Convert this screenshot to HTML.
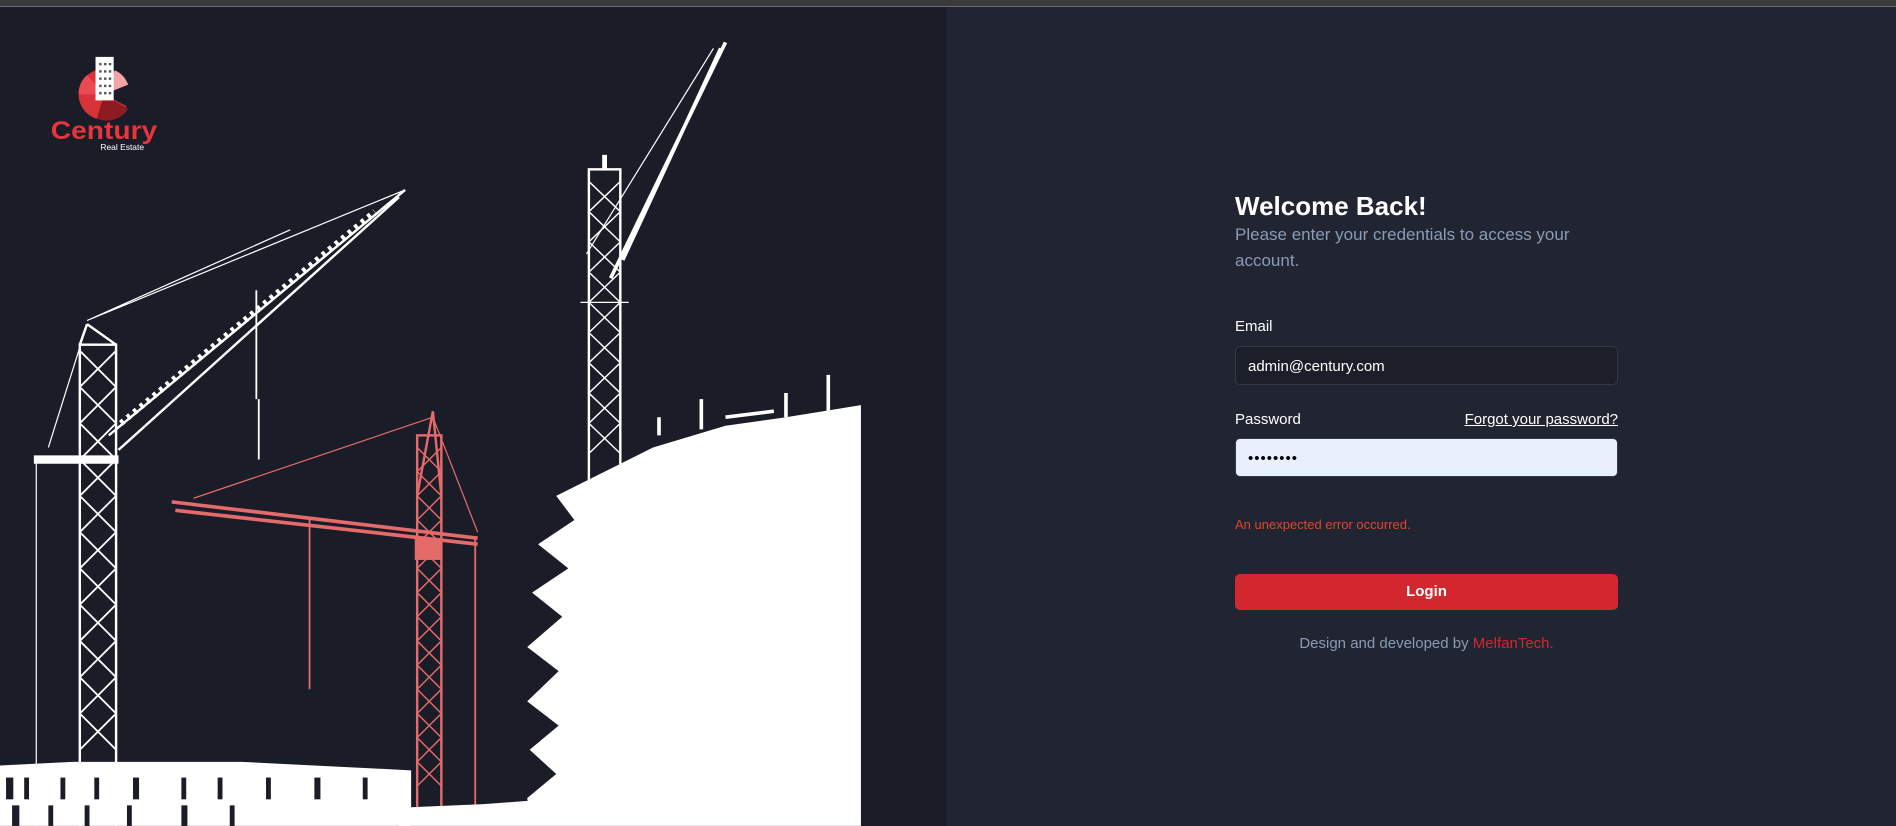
<!DOCTYPE html>
<html><head><meta charset="utf-8"><style>
*{margin:0;padding:0;box-sizing:border-box}
html,body{width:1896px;height:826px;overflow:hidden;background:#212532;font-family:"Liberation Sans",sans-serif}
.top{position:absolute;left:0;top:0;width:1896px;height:7px;background:#3a3a3a;border-bottom:1px solid #6a6a6a}
.left{position:absolute;left:0;top:7px;width:947px;height:819px;background:#1a1c27}
svg.art{position:absolute;left:0;top:0}
.form{position:absolute;left:1235px;top:0;width:383px;color:#fff}
h1{position:absolute;top:191px;font-size:26px;font-weight:bold;white-space:nowrap}
.sub{position:absolute;top:222px;width:383px;font-size:17px;line-height:26px;color:#8a9bb3}
.lbl{position:absolute;font-size:15px;color:#fff}
.inp{position:absolute;left:0;width:383px;height:39px;border:1px solid #343948;border-radius:5px;font-size:15px;padding:11px 12px}
.err{position:absolute;top:517px;font-size:13px;color:#e0442f}
.btn{position:absolute;top:574px;left:0;width:383px;height:36px;background:#d32730;border-radius:5px;text-align:center;line-height:36px;font-weight:bold;font-size:15px}
.foot{position:absolute;top:635px;width:383px;text-align:center;font-size:15px;color:#8a9bb3}
</style></head><body>
<div class="top"></div>
<div class="left"></div>
<svg class="art" width="1896" height="826" viewBox="0 0 1568 683">
<!-- logo -->
<g>
<circle cx="86" cy="78" r="21" fill="#d8323a"/>
<path d="M86 78 L107 67 A21 21 0 0 1 107 89 Z" fill="#1a1c27"/>
<path d="M86 78 L95 58 A21 21 0 0 1 106 70 Z" fill="#f4a3a6"/>
<path d="M86 78 L65 78 A21 21 0 0 1 72 62 Z" fill="#ea4a51"/>
<path d="M86 78 L106 90 A21 21 0 0 1 80 98 Z" fill="#8f1b22"/>
<rect x="79" y="47" width="15" height="36" fill="#fff"/>
<g fill="#555"><rect x="82" y="52" width="2" height="2"/><rect x="86" y="52" width="2" height="2"/><rect x="90" y="52" width="2" height="2"/><rect x="82" y="58" width="2" height="2"/><rect x="86" y="58" width="2" height="2"/><rect x="90" y="58" width="2" height="2"/><rect x="82" y="64" width="2" height="2"/><rect x="86" y="64" width="2" height="2"/><rect x="90" y="64" width="2" height="2"/><rect x="82" y="70" width="2" height="2"/><rect x="86" y="70" width="2" height="2"/><rect x="90" y="70" width="2" height="2"/><rect x="82" y="76" width="2" height="2"/><rect x="86" y="76" width="2" height="2"/><rect x="90" y="76" width="2" height="2"/></g>
<text x="42" y="115" font-family="Liberation Sans" font-weight="bold" font-size="21" fill="#e8343d" textLength="88" lengthAdjust="spacingAndGlyphs">Century</text>
<text x="83" y="124" font-family="Liberation Sans" font-size="7" fill="#fff">Real Estate</text>
</g>
<!-- left white crane -->
<g stroke="#fff" fill="none">
<rect x="66" y="285" width="30" height="400" stroke-width="2"/>
<path d="M66 290 L96 320 M96 290 L66 320 M66 320 L96 350 M96 320 L66 350 M66 350 L96 380 M96 350 L66 380 M66 380 L96 410 M96 380 L66 410 M66 410 L96 440 M96 410 L66 440 M66 440 L96 470 M96 440 L66 470 M66 470 L96 500 M96 470 L66 500 M66 500 L96 530 M96 500 L66 530 M66 530 L96 560 M96 530 L66 560 M66 560 L96 590 M96 560 L66 590 M66 590 L96 620 M96 590 L66 620" stroke-width="1.5"/>
<path d="M72 268 L66 285 M72 268 L96 285" stroke-width="2"/>
<path d="M90 360 L335 157 M98 372 L330 163" stroke-width="2"/>
<path d="M72 265 L335 157 M72 265 L240 190 M40 370 L72 268 M30 380 L30 683" stroke-width="1"/>
<path d="M28 380 L98 380" stroke-width="7"/>
<path d="M212 240 L212 330 M214 330 L214 380" stroke-width="1.5"/>
<path d="M100 350 L310 175" stroke-width="5" stroke-dasharray="3 4"/>
</g>
<!-- red crane -->
<g stroke="#e56b6b" fill="none">
<rect x="345" y="360" width="20" height="310" stroke-width="2"/>
<path d="M345 370 L365 390 M365 370 L345 390 M345 390 L365 410 M365 390 L345 410 M345 410 L365 430 M365 410 L345 430 M345 430 L365 450 M365 430 L345 450 M345 450 L365 470 M365 450 L345 470 M345 470 L365 490 M365 470 L345 490 M345 490 L365 510 M365 490 L345 510 M345 510 L365 530 M365 510 L345 530 M345 530 L365 550 M365 530 L345 550 M345 550 L365 570 M365 550 L345 570 M345 570 L365 590 M365 570 L345 590 M345 590 L365 610 M365 590 L345 610 M345 610 L365 630 M365 610 L345 630 M345 630 L365 650 M365 630 L345 650" stroke-width="1.2"/>
<path d="M358 340 L345 410 M358 340 L365 410" stroke-width="2"/>
<path d="M142 415 L395 445 M145 422 L395 450" stroke-width="3"/>
<path d="M160 412 L358 345 M358 345 L395 440" stroke-width="1"/>
<path d="M256 430 L256 570 M393 445 L393 668" stroke-width="1.5"/>
<rect x="343" y="445" width="22" height="18" fill="#e56b6b" stroke="none"/>
</g>
<!-- right crane -->
<g stroke="#fff" fill="none">
<rect x="487" y="140" width="26" height="260" stroke-width="2"/>
<path d="M487 150 L513 175 M513 150 L487 175 M487 175 L513 200 M513 175 L487 200 M487 200 L513 225 M513 200 L487 225 M487 225 L513 250 M513 225 L487 250 M487 250 L513 275 M513 250 L487 275 M487 275 L513 300 M513 275 L487 300 M487 300 L513 325 M513 300 L487 325 M487 325 L513 350 M513 325 L487 350 M487 350 L513 375 M513 350 L487 375" stroke-width="1.2"/>
<path d="M500 128 L500 140" stroke-width="4"/>
<path d="M505 230 L600 35 M515 215 L596 40" stroke-width="3"/>
<path d="M485 210 L590 40 M480 250 L520 250" stroke-width="1"/>
</g>
<!-- building -->
<path d="M712 335 L712 683 L440 683 L436 660 L460 640 L438 620 L462 600 L436 580 L462 555 L436 535 L465 510 L440 490 L470 470 L445 450 L475 430 L460 410 L480 400 L540 370 L600 352 L650 345 L712 335 Z" fill="#fff"/>
<path d="M545 345 L545 360 M580 330 L580 355 M650 325 L650 345 M685 310 L685 340 M600 345 L640 340" stroke="#fff" stroke-width="3"/>
<!-- ground building -->
<path d="M0 633 L60 630 L200 630 L340 637 L340 683 L0 683 Z" fill="#fff"/>
<path d="M330 668 L400 665 L440 662 L440 683 L330 683 Z" fill="#fff"/>
<g fill="#1a1c27"><rect x="5" y="643" width="6" height="18"/><rect x="20" y="643" width="4" height="18"/><rect x="50" y="643" width="4" height="18"/><rect x="78" y="643" width="4" height="18"/><rect x="110" y="643" width="5" height="18"/><rect x="150" y="643" width="4" height="18"/><rect x="180" y="643" width="4" height="18"/><rect x="220" y="643" width="4" height="18"/><rect x="260" y="643" width="5" height="18"/><rect x="300" y="643" width="4" height="18"/><rect x="10" y="666" width="6" height="17"/><rect x="40" y="666" width="4" height="17"/><rect x="70" y="666" width="4" height="17"/><rect x="105" y="666" width="4" height="17"/><rect x="150" y="666" width="5" height="17"/><rect x="190" y="666" width="4" height="17"/></g>
</svg>
<div class="form">
<h1>Welcome Back!</h1>
<div class="sub">Please enter your credentials to access your account.</div>
<div class="lbl" style="top:318px">Email</div>
<div class="inp" style="top:346px;background:#1c1f2a;color:#fff">admin@century.com</div>
<div class="lbl" style="top:411px">Password</div>
<div class="lbl" style="top:411px;right:0;text-decoration:underline">Forgot your password?</div>
<div class="inp" style="top:438px;background:#e8f0fe;color:#000;letter-spacing:1px;font-size:15px">••••••••</div>
<div class="err">An unexpected error occurred.</div>
<div class="btn">Login</div>
<div class="foot">Design and developed by <span style="color:#d32730">MelfanTech.</span></div>
</div>
</body></html>
